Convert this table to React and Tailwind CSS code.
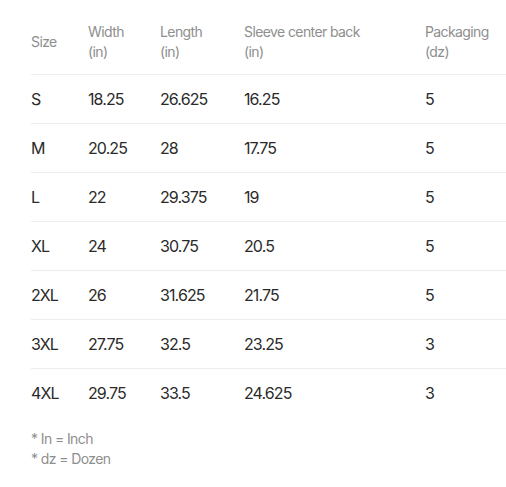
const HEADERS = [
  ['Size'],
  ['Width', '(in)'],
  ['Length', '(in)'],
  ['Sleeve center back', '(in)'],
  ['Packaging', '(dz)'],
];

const ROWS = [
  ['S', '18.25', '26.625', '16.25', '5'],
  ['M', '20.25', '28', '17.75', '5'],
  ['L', '22', '29.375', '19', '5'],
  ['XL', '24', '30.75', '20.5', '5'],
  ['2XL', '26', '31.625', '21.75', '5'],
  ['3XL', '27.75', '32.5', '23.25', '3'],
  ['4XL', '29.75', '33.5', '24.625', '3'],
];

const COLS = 'grid grid-cols-[57px_72px_84px_181px_1fr]';

export default function App() {
  return (
    <div
      className="min-h-screen bg-white pl-[31px] pt-[10px]"
      style={{ fontFamily: 'Inter, "Noto Sans", sans-serif' }}
    >
      <div className={`${COLS} items-center py-3 text-sm leading-5 tracking-[-0.6px] text-[#8e8e8e] border-b border-[#ececec]`}>
        {HEADERS.map((h, i) => (
          <div key={i}>
            {h.map((line) => (
              <div key={line}>{line}</div>
            ))}
          </div>
        ))}
      </div>

      {ROWS.map((row, i) => (
        <div
          key={row[0]}
          className={`${COLS} items-center py-3 text-base leading-6 tracking-[-0.9px] text-[#2a2a2a] ${
            i < ROWS.length - 1 ? 'border-b border-[#ececec]' : ''
          }`}
        >
          {row.map((cell, j) => (
            <div key={j}>{cell}</div>
          ))}
        </div>
      ))}

      <div className="mt-3 text-sm leading-5 tracking-[-0.6px] text-[#8e8e8e]">
        <div>* In = Inch</div>
        <div>* dz = Dozen</div>
      </div>
    </div>
  );
}
